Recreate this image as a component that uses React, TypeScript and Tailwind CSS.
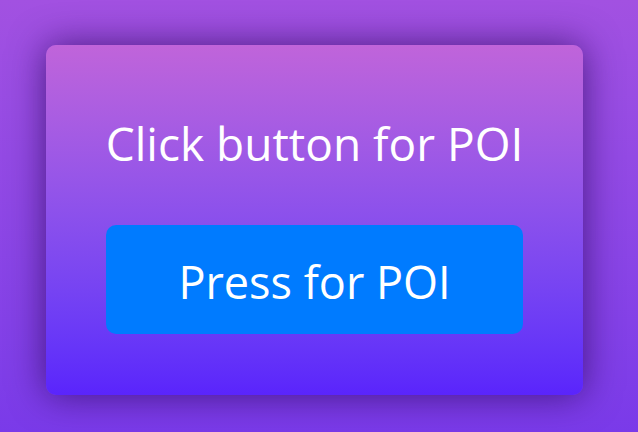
export default function App() {
  return (
    <div className="w-[638px] h-[432px] bg-gradient-to-b from-[#a251e1] to-[#7a3ae9] flex items-center justify-center pr-[9px] pt-[8px] font-['Open_Sans',sans-serif]">
      <div className="w-[537px] h-[350px] rounded-[10px] bg-gradient-to-b from-[#c064da] to-[#5a24fc] shadow-[0_0_36px_rgba(40,5,85,0.7)] flex flex-col items-center px-[60px] pt-[70px]">
        <h1 className="text-white text-[46px] leading-[56px] font-normal whitespace-nowrap">Click button for POI</h1>
        <button className="mt-[54px] w-full h-[109px] rounded-[10px] bg-[#007bff] text-white text-[45px] leading-[56px] pt-[4px]">
          Press for POI
        </button>
      </div>
    </div>
  );
}
